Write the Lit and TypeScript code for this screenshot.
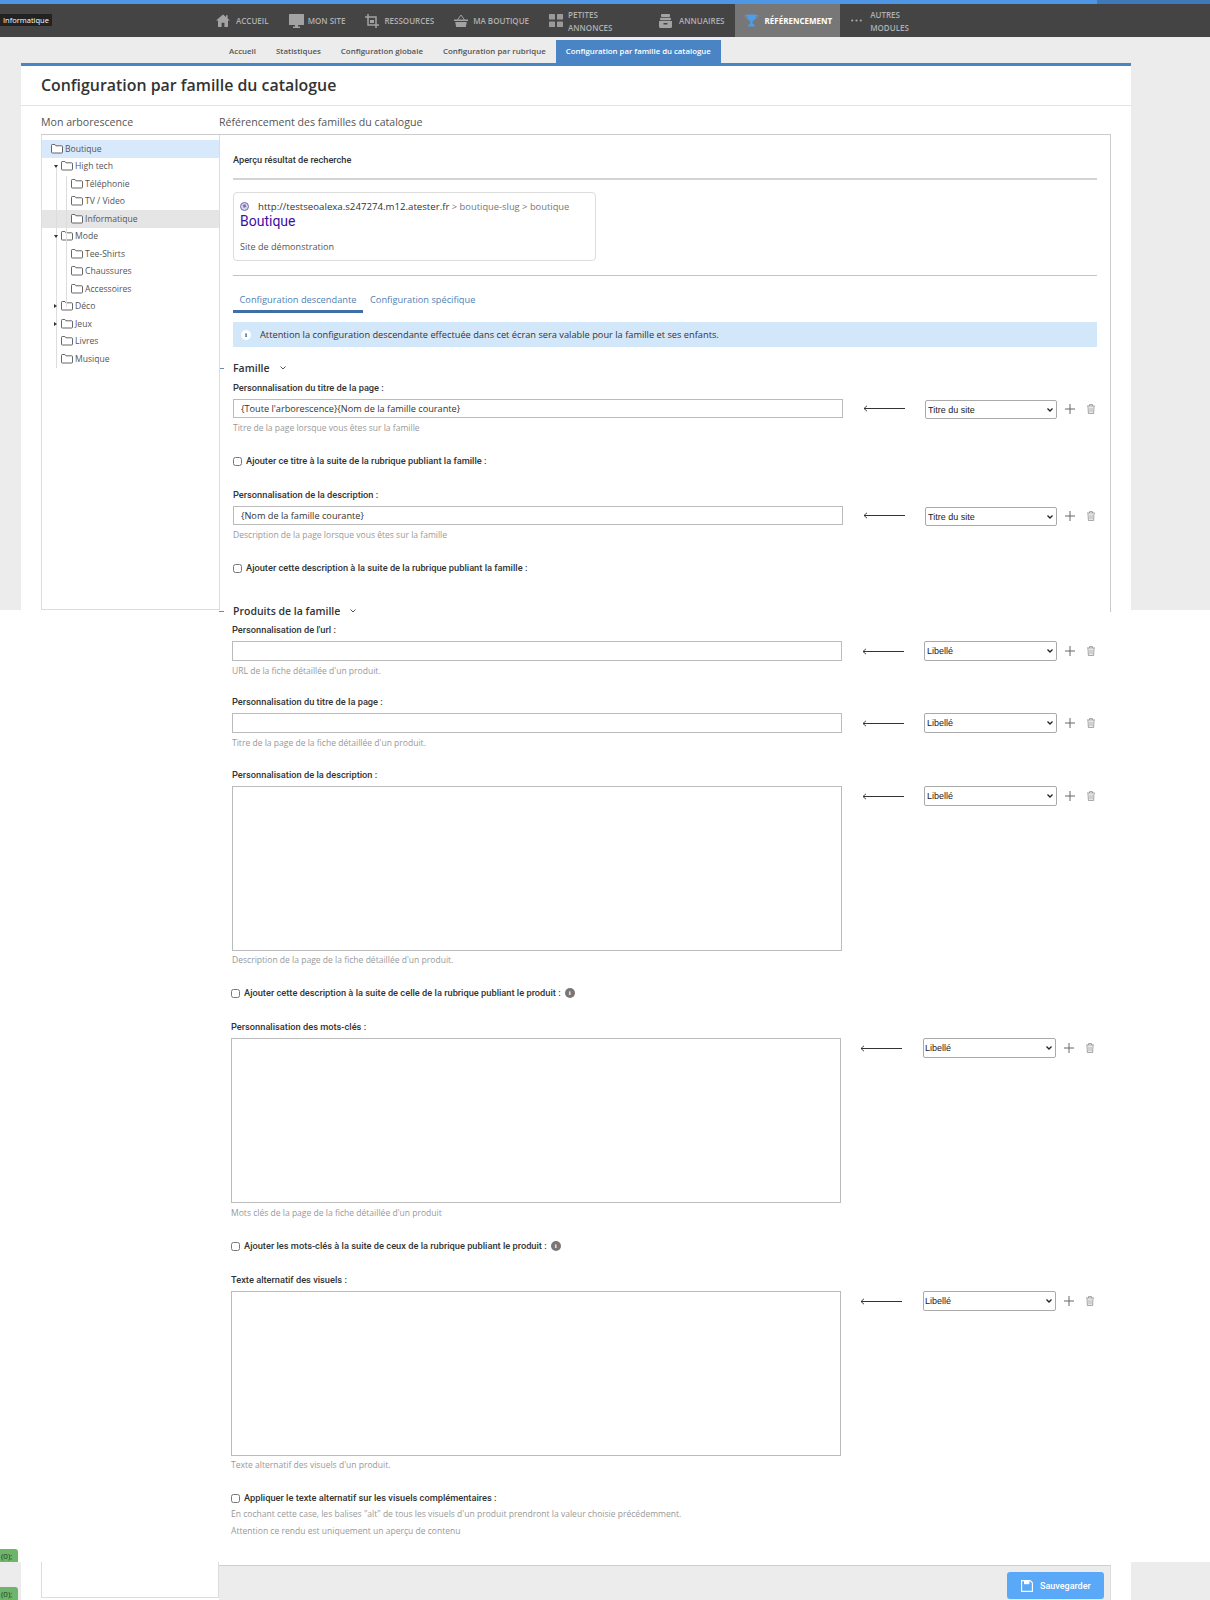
import { LitElement, html, css, svg } from "lit";
import { customElement } from "lit/decorators.js";

const I = {
  home: svg`<svg class="ic" width="14" height="13" viewBox="0 0 14 13"><path fill="#a3a3a3" d="M7 .5 0 6.6h2V13h3.6V8.8h2.8V13H12V6.6h2L11.6 4.4V1.2H10v1.8z"/></svg>`,
  monitor: svg`<svg class="ic" width="15" height="14" viewBox="0 0 15 14"><path fill="#a3a3a3" d="M.6 0h13.8q.6 0 .6.6v9.8q0 .6-.6.6H.6q-.6 0-.6-.6V.6Q0 0 .6 0zM6 11h3v1.6h2V14H4v-1.4h2z"/></svg>`,
  crop: svg`<svg class="ic" width="14" height="14" viewBox="0 0 14 14"><path fill="none" stroke="#a3a3a3" stroke-width="1.5" d="M3 0v11h11M0 3h11v11"/><rect x="5" y="6" width="4" height="3" fill="#a3a3a3"/></svg>`,
  basket: svg`<svg class="ic" width="14" height="13" viewBox="0 0 14 13"><path fill="none" stroke="#a3a3a3" d="M3.5 6 7 1l3.5 5"/><path fill="#a3a3a3" d="M0 5.5h14V7H0zM1.2 8h11.6l-1 5H2.200z"/></svg>`,
  grid: svg`<svg class="ic" width="14" height="13" viewBox="0 0 14 13"><g fill="#9a9a9a"><rect width="6" height="5.500" rx=".6"/><rect x="8" width="6" height="5.500" rx=".6"/><rect y="7.500" width="6" height="5.500" rx=".6"/><rect x="8" y="7.500" width="6" height="5.500" rx=".6"/></g></svg>`,
  book: svg`<svg class="ic" width="13" height="14" viewBox="0 0 13 14"><g fill="#a3a3a3"><rect x="2" width="9" height="3" rx="1"/><rect x="1" y="3.800" width="11" height="2.400" rx="1"/><path d="M0 7h13v5.500q0 1.500-1.500 1.500h-10Q0 14 0 12.500zM4.500 9v1.500h4V9z"/></g></svg>`,
  trophy: svg`<svg class="ic" width="13" height="13" viewBox="0 0 13 13"><path fill="#4f9ce8" d="M2 .5h9c0 3-.8 5.500-3.300 6.600V10c1.200.2 2 .9 2.300 2.500H3c.3-1.600 1.100-2.300 2.300-2.500V7.100C2.800 6 2 3.500 2 .5z"/><path fill="none" stroke="#4f9ce8" d="M2 1.500H.5c0 2 1 3.200 2.800 3.500M11 1.500h1.500c0 2-1 3.200-2.800 3.500"/></svg>`,
  dots: svg`<svg class="ic" width="11" height="3" viewBox="0 0 11 3"><g fill="#aaa"><circle cx="1.200" cy="1.500" r="1.100"/><circle cx="5.500" cy="1.500" r="1.100"/><circle cx="9.800" cy="1.500" r="1.100"/></g></svg>`,
  folder: svg`<svg class="folder" width="12" height="10" viewBox="0 0 12 10"><path fill="#fff" stroke="#555" stroke-width=".9" d="M.5 1.300q0-.8.8-.8h2.600l1 1.300h5.800q.8 0 .8.8v5.600q0 .8-.8.8H1.300q-.8 0-.8-.8z"/></svg>`,
  arrow: svg`<svg class="arrow" width="42" height="7" viewBox="0 0 42 7"><path fill="none" stroke="#444" d="M4 .8 1 3.500 4 6.200"/><path stroke="#333" d="M1 3.500h41"/></svg>`,
  plus: svg`<svg class="plus" width="10" height="10" viewBox="0 0 10 10"><path stroke="#666" d="M5 0v10M0 5h10"/></svg>`,
  trash: svg`<svg class="trash" width="8" height="10" viewBox="0 0 8 10"><path fill="none" stroke="#8a8a8a" stroke-width=".8" d="M0 2h8M2.500 2V.6h3V2M1 2.400l.4 7.200h5.200l.4-7.200M3 3.500v5M5 3.500v5"/></svg>`,
  save: svg`<svg class="save" width="12" height="12" viewBox="0 0 12 12"><path fill="none" stroke="#fff" stroke-width="1.100" d="M.6.6h8.600l2.200 2.200v8.600H.6z"/><path fill="#fff" d="M3 .6h5.400v3.600H3z"/></svg>`,
  globe: svg`<svg class="globe" width="9" height="9" viewBox="0 0 9 9"><circle cx="4.500" cy="4.500" r="4" fill="#d9d6ec" stroke="#6f6ab0"/><path fill="#7b76b8" d="M2.500 3.500 5 2l1.500 2.500L4 6z"/></svg>`,
};

const TREE: [string, number, string][] = [
  ["Boutique", 0, "sel"], ["High tech", 1, "open"], ["Téléphonie", 2, ""], ["TV / Video", 2, ""],
  ["Informatique", 2, "cur"], ["Mode", 1, "open"], ["Tee-Shirts", 2, ""], ["Chaussures", 2, ""],
  ["Accessoires", 2, ""], ["Déco", 1, "closed"], ["Jeux", 1, "closed"], ["Livres", 1, ""], ["Musique", 1, ""],
];

@customElement("app-root")
export class AppRoot extends LitElement {
  static styles = css`
    :host { display: block; width: 1210px; height: 1600px; overflow: hidden; background: #fff; font-family: "Open Sans", sans-serif; color: #444; }
    .bar { height: 4px; background: linear-gradient(to right, #4f97e4 1097px, #3f79b8 1097px); }
    .nav { height: 33px; background: #444; display: flex; align-items: stretch; padding-left: 216px; position: relative; }
    .tip { position: absolute; left: 0; top: 10px; height: 12px; width: 52px; background: #222; color: #fff; font-size: 7.5px; line-height: 12px; padding-left: 3px; box-sizing: border-box; }
    .nitem { display: flex; align-items: center; gap: 6px; margin-right: 20px; color: #b0b0b0; font-size: 8px; font-weight: 600; text-transform: uppercase; line-height: 13px; white-space: nowrap; }
    .nitem.site { gap: 4px; }
    .nitem.crop { gap: 5px; }
    .nitem.shop { gap: 5px; }
    .nitem.two { width: 90px; gap: 5px; }
    .nitem.book { gap: 7px; }
    .nitem.act { background: #777; color: #fff; padding: 0 8px 0 10px; margin: 0 11px 0 -10px; font-weight: 700; gap: 7px; }
    .nitem.more { gap: 8px; }
    .ic { flex: none; }
    .sub { height: 26px; background: #ececec; display: flex; padding-left: 229px; gap: 20px; font-size: 7.9px; font-weight: 600; color: #555; }
    .sub span { padding-top: 9px; white-space: nowrap; }
    .sub .on { margin: 3px 0 0 -10px; padding: 6px 10px 0; background: #4a84c4; color: #fff; font-weight: 600; font-size: 7.8px; }
    .s1 { height: 547px; background: #ececec; padding: 0 79px 0 21px; }
    .panel { height: 547px; background: #fff; border-top: 3px solid #4a84c4; box-sizing: border-box; }
    .head { height: 39px; border-bottom: 1px solid #e4e4e4; padding-left: 20px; font-size: 15.9px; font-weight: 600; color: #333; line-height: 38px; }
    .caps { display: flex; height: 28px; padding-left: 20px; font-size: 10.6px; color: #555; line-height: 32px; }
    .caps span:first-child { width: 178px; }
    .cols { display: flex; height: 477px; margin: 0 20px; border-top: 1px solid #ccc; }
    .treebox { width: 178px; height: 475px; box-sizing: border-box; border-left: 1px solid #ddd; border-bottom: 1px solid #ddd; padding-top: 5px; position: relative; flex: none; }
    .row { height: 17.5px; display: flex; align-items: center; font-size: 8.6px; color: #555; gap: 2px; white-space: nowrap; }
    .row.l0 { padding-left: 9px; }
    .row.l1 { padding-left: 19px; }
    .row.l2 { padding-left: 29px; }
    .row.sel { background: #d8e9fb; }
    .row.cur { background: #e5e5e5; }
    .tw { position: absolute; left: 12px; width: 0; height: 0; }
    .tw.open { border-left: 2.500px solid transparent; border-right: 2.500px solid transparent; border-top: 3.500px solid #333; }
    .tw.closed { border-top: 2.500px solid transparent; border-bottom: 2.500px solid transparent; border-left: 3.500px solid #333; }
    .guide { position: absolute; left: 14px; top: 33px; height: 200px; width: 1px; background: #ddd; }
    .guide.g2 { left: 24px; top: 41px; height: 131px; }
    .main { flex: 1; box-sizing: border-box; position: relative; border-right: 1px solid #ccc; padding: 0 13px 0 14px; height: 477px; }
    .main::before { content: ""; position: absolute; left: 0; top: 0; width: 1px; height: 475px; background: #ddd; }
    .apercu { font: 500 9.200px/12px Roboto, sans-serif; color: #333; margin-top: 19px; }
    hr { border: 0; margin: 0; height: 1px; background: #c4c4c4; }
    .h1 { margin-top: 12px; height: 2px; background: #d4d4d4; }
    .card { width: 363px; height: 69px; box-sizing: border-box; border: 1px solid #ddd; border-radius: 4px; margin: 12px 0 14px; padding: 7px 6px; }
    .url { font-size: 9.350px; line-height: 13px; color: #777; display: flex; align-items: center; white-space: nowrap; }
    .url b { font-weight: 400; color: #333; font-size: 9.670px; }
    .globe { margin-right: 9px; flex: none; }
    .ct { font: 400 14px/17px Roboto, sans-serif; color: #3f0f9f; }
    .cd { font-size: 9.100px; color: #555; line-height: 13px; margin-top: 10px; }
    .tabs { display: flex; gap: 7px; margin-top: 14px; height: 23px; }
    .tabs span { font-size: 9.250px; color: #4f7fb5; line-height: 20px; white-space: nowrap; }
    .tabs .on { width: 130px; text-align: center; border-bottom: 3px solid #3f6ea8; box-sizing: border-box; height: 23px; }
    .alert { margin-top: 9px; height: 25px; background: #d3e7fb; display: flex; align-items: center; padding-left: 8px; font-size: 9.250px; color: #333; gap: 9px; white-space: nowrap; }
    .dot { width: 10px; height: 10px; border-radius: 50%; background: #fff; color: #333; font: 700 7px/10px "Liberation Serif", serif; text-align: center; flex: none; }
    .sect { display: flex; align-items: center; height: 14px; font-size: 10.500px; font-weight: 600; color: #333; white-space: nowrap; margin-top: 14px; line-height: 14px; }
    .sect::before { content: ""; width: 5px; height: 1px; background: #6b8db5; margin-left: -14px; margin-right: 9px; }
    .sect .chev { margin-left: 10px; }
    .sect.last { margin-top: 29px; }
    .field { margin-top: 20px; }
    .field.first { margin-top: 6px; }
    .field.t17 { margin-top: 17px; }
    .field.t18 { margin-top: 18px; }
    .lab { font: 500 9.250px/14px Roboto, sans-serif; color: #333; height: 14px; margin-bottom: 4px; white-space: nowrap; }
    .line { display: flex; align-items: flex-start; }
    .main .line { height: 19px; }
    .ctl { box-sizing: border-box; border: 1px solid #bbb; width: 610px; height: 20px; background: #fff; flex: none; font: 400 9.200px "Open Sans", sans-serif; color: #333; padding: 0 7px; margin: 0; border-radius: 0; outline: none; display: block; resize: none; }
    .ctl.big { height: 165px; }
    .main .ctl { height: 19px; }
    .arrow { flex: none; margin: 7px 0 0 20px; }
    .main .arrow { margin-top: 6px; }
    select {
      appearance: none; flex: none; box-sizing: border-box; width: 133px; height: 20px; margin: 0 0 0 20px; border: 1px solid #aaa; border-radius: 2px;
      font: 400 9px "Liberation Sans", Arial, sans-serif; color: #222; padding: 0 0 0 2px;
      background: #fff url("data:image/svg+xml,%3Csvg xmlns='http://www.w3.org/2000/svg' width='6' height='4'%3E%3Cpath fill='none' stroke='%23222' stroke-width='1.300' d='M.5.5 3 3 5.500.5'/%3E%3C/svg%3E") no-repeat right 3px center;
    }
    .main select { margin-top: 1px; height: 19px; width: 132px; }
    .plus { flex: none; margin: 5px 0 0 8px; }
    .trash { flex: none; margin: 5px 0 0 12px; }
    .hint { font-size: 8.550px; line-height: 14px; height: 14px; color: #999; margin-top: 3px; white-space: nowrap; }
    .hint.tight { margin-top: 2px; }
    .chk { display: flex; align-items: center; height: 14px; margin-top: 19px; font: 500 9.250px/14px Roboto, sans-serif; color: #333; white-space: nowrap; }
    .chk input { width: 9px; height: 9px; margin: 0 4px 0 0; flex: none; accent-color: #333; }
    .chk .i { width: 10px; height: 10px; border-radius: 50%; background: #777; color: #fff; font: 700 7px/10px "Liberation Serif", serif; text-align: center; margin-left: 4px; }
    .s2 { height: 952px; padding-left: 232px; box-sizing: border-box; padding-top: 13px; overflow: hidden; }
    .s2 .field:first-child { margin-top: 0; }
    .shift { margin-left: -1px; }
    .shift .arrow { margin-left: 19px; }
    .shift select { margin-left: 21px; padding-left: 1px; }
    .note { font-size: 8.550px; line-height: 17px; color: #999; white-space: nowrap; margin-top: 1px; }
    .s3 { height: 38px; display: flex; background: #fff; }
    .g0 { width: 21px; background: #ececec; position: relative; }
    .badge { position: absolute; left: 0; width: 18px; height: 13px; background: #6db56b; border-radius: 0 3px 0 0; font-size: 8px; line-height: 14px; color: #20401f; box-sizing: border-box; padding-left: 1px; }
    .b1 { top: -13px; }
    .b2 { bottom: 0; }
    .w1 { width: 20px; }
    .tb { width: 178px; height: 36px; box-sizing: border-box; border: 1px solid #ddd; border-top: 0; }
    .foot { width: 892px; margin-top: 3px; background: #ececec; border-top: 1px solid #cfcfcf; border-right: 1px solid #ddd; box-sizing: border-box; display: flex; justify-content: flex-end; padding: 6px 6px 0 0; }
    .btn { width: 97px; height: 27px; background: #5aa9f8; color: #fff; border-radius: 3px; display: flex; align-items: center; gap: 7px; padding-left: 14px; box-sizing: border-box; font: 500 9px Roboto, sans-serif; }
    .w2 { width: 20px; }
    .g3 { flex: 1; background: #ececec; }
  `;

  line(kind: "in" | "ta", opt: string, val = "") {
    return html`<div class="line">
      ${kind === "in"
        ? html`<input class="ctl" .value=${val} />`
        : html`<textarea class="ctl big"></textarea>`}
      ${I.arrow}
      <select><option>${opt}</option></select>
      ${I.plus}${I.trash}
    </div>`;
  }

  render() {
    const chev = svg`<svg class="chev" width="6" height="4" viewBox="0 0 6 4"><path fill="none" stroke="#555" d="M.5.5 3 3 5.500.5"/></svg>`;
    return html`
      <div class="bar"></div>
      <div class="nav">
        <div class="tip">Informatique</div>
        <div class="nitem">${I.home}Accueil</div>
        <div class="nitem site">${I.monitor}Mon site</div>
        <div class="nitem crop">${I.crop}Ressources</div>
        <div class="nitem shop">${I.basket}Ma boutique</div>
        <div class="nitem two">${I.grid}<span>Petites<br />annonces</span></div>
        <div class="nitem book">${I.book}Annuaires</div>
        <div class="nitem act">${I.trophy}Référencement</div>
        <div class="nitem more">${I.dots}<span>Autres<br />modules</span></div>
      </div>
      <div class="sub">
        <span>Accueil</span><span>Statistiques</span><span>Configuration globale</span><span>Configuration par rubrique</span>
        <span class="on">Configuration par famille du catalogue</span>
      </div>
      <div class="s1">
        <div class="panel">
          <div class="head">Configuration par famille du catalogue</div>
          <div class="caps"><span>Mon arborescence</span><span>Référencement des familles du catalogue</span></div>
          <div class="cols">
            <div class="treebox">
              <div class="guide"></div><div class="guide g2"></div>
              ${TREE.map(([t, l, f]) => html`<div class="row l${l} ${f}">
                ${f === "open" || f === "closed" ? html`<i class="tw ${f}"></i>` : ""}${I.folder}<span>${t}</span>
              </div>`)}
            </div>
            <div class="main">
              <div class="apercu">Aperçu résultat de recherche</div>
              <div class="h1"></div>
              <div class="card">
                <div class="url">${I.globe}<b>http://testseoalexa.s247274.m12.atester.fr</b>&nbsp;&gt; boutique-slug &gt; boutique</div>
                <div class="ct">Boutique</div>
                <div class="cd">Site de démonstration</div>
              </div>
              <hr />
              <div class="tabs"><span class="on">Configuration descendante</span><span>Configuration spécifique</span></div>
              <div class="alert"><span class="dot">i</span>Attention la configuration descendante effectuée dans cet écran sera valable pour la famille et ses enfants.</div>
              <div class="sect">Famille${chev}</div>
              <div class="field first">
                <div class="lab">Personnalisation du titre de la page :</div>
                ${this.line("in", "Titre du site", "{Toute l'arborescence}{Nom de la famille courante}")}
                <div class="hint">Titre de la page lorsque vous êtes sur la famille</div>
              </div>
              <label class="chk"><input type="checkbox" />Ajouter ce titre à la suite de la rubrique publiant la famille :</label>
              <div class="field">
                <div class="lab">Personnalisation de la description :</div>
                ${this.line("in", "Titre du site", "{Nom de la famille courante}")}
                <div class="hint">Description de la page lorsque vous êtes sur la famille</div>
              </div>
              <label class="chk"><input type="checkbox" />Ajouter cette description à la suite de la rubrique publiant la famille :</label>
              <div class="sect last">Produits de la famille${chev}</div>
            </div>
          </div>
        </div>
      </div>
      <div class="s2">
        <div class="field">
          <div class="lab">Personnalisation de l'url :</div>
          ${this.line("in", "Libellé")}
          <div class="hint">URL de la fiche détaillée d'un produit.</div>
        </div>
        <div class="field t17">
          <div class="lab">Personnalisation du titre de la page :</div>
          ${this.line("in", "Libellé")}
          <div class="hint">Titre de la page de la fiche détaillée d'un produit.</div>
        </div>
        <div class="field t18">
          <div class="lab">Personnalisation de la description :</div>
          ${this.line("ta", "Libellé")}
          <div class="hint tight">Description de la page de la fiche détaillée d'un produit.</div>
        </div>
        <label class="chk shift"><input type="checkbox" />Ajouter cette description à la suite de celle de la rubrique publiant le produit :<span class="i">i</span></label>
        <div class="field shift">
          <div class="lab">Personnalisation des mots-clés :</div>
          ${this.line("ta", "Libellé")}
          <div class="hint">Mots clés de la page de la fiche détaillée d'un produit</div>
        </div>
        <label class="chk shift"><input type="checkbox" />Ajouter les mots-clés à la suite de ceux de la rubrique publiant le produit :<span class="i">i</span></label>
        <div class="field shift">
          <div class="lab">Texte alternatif des visuels :</div>
          ${this.line("ta", "Libellé")}
          <div class="hint tight">Texte alternatif des visuels d'un produit.</div>
        </div>
        <label class="chk shift"><input type="checkbox" />Appliquer le texte alternatif sur les visuels complémentaires :</label>
        <div class="note shift">En cochant cette case, les balises "alt" de tous les visuels d'un produit prendront la valeur choisie précédemment.<br />Attention ce rendu est uniquement un aperçu de contenu</div>
      </div>
      <div class="s3">
        <div class="g0"><div class="badge b1">(0);</div><div class="badge b2">(0);</div></div>
        <div class="w1"></div>
        <div class="tb"></div>
        <div class="foot"><div class="btn">${I.save}Sauvegarder</div></div>
        <div class="w2"></div>
        <div class="g3"></div>
      </div>
    `;
  }
}
